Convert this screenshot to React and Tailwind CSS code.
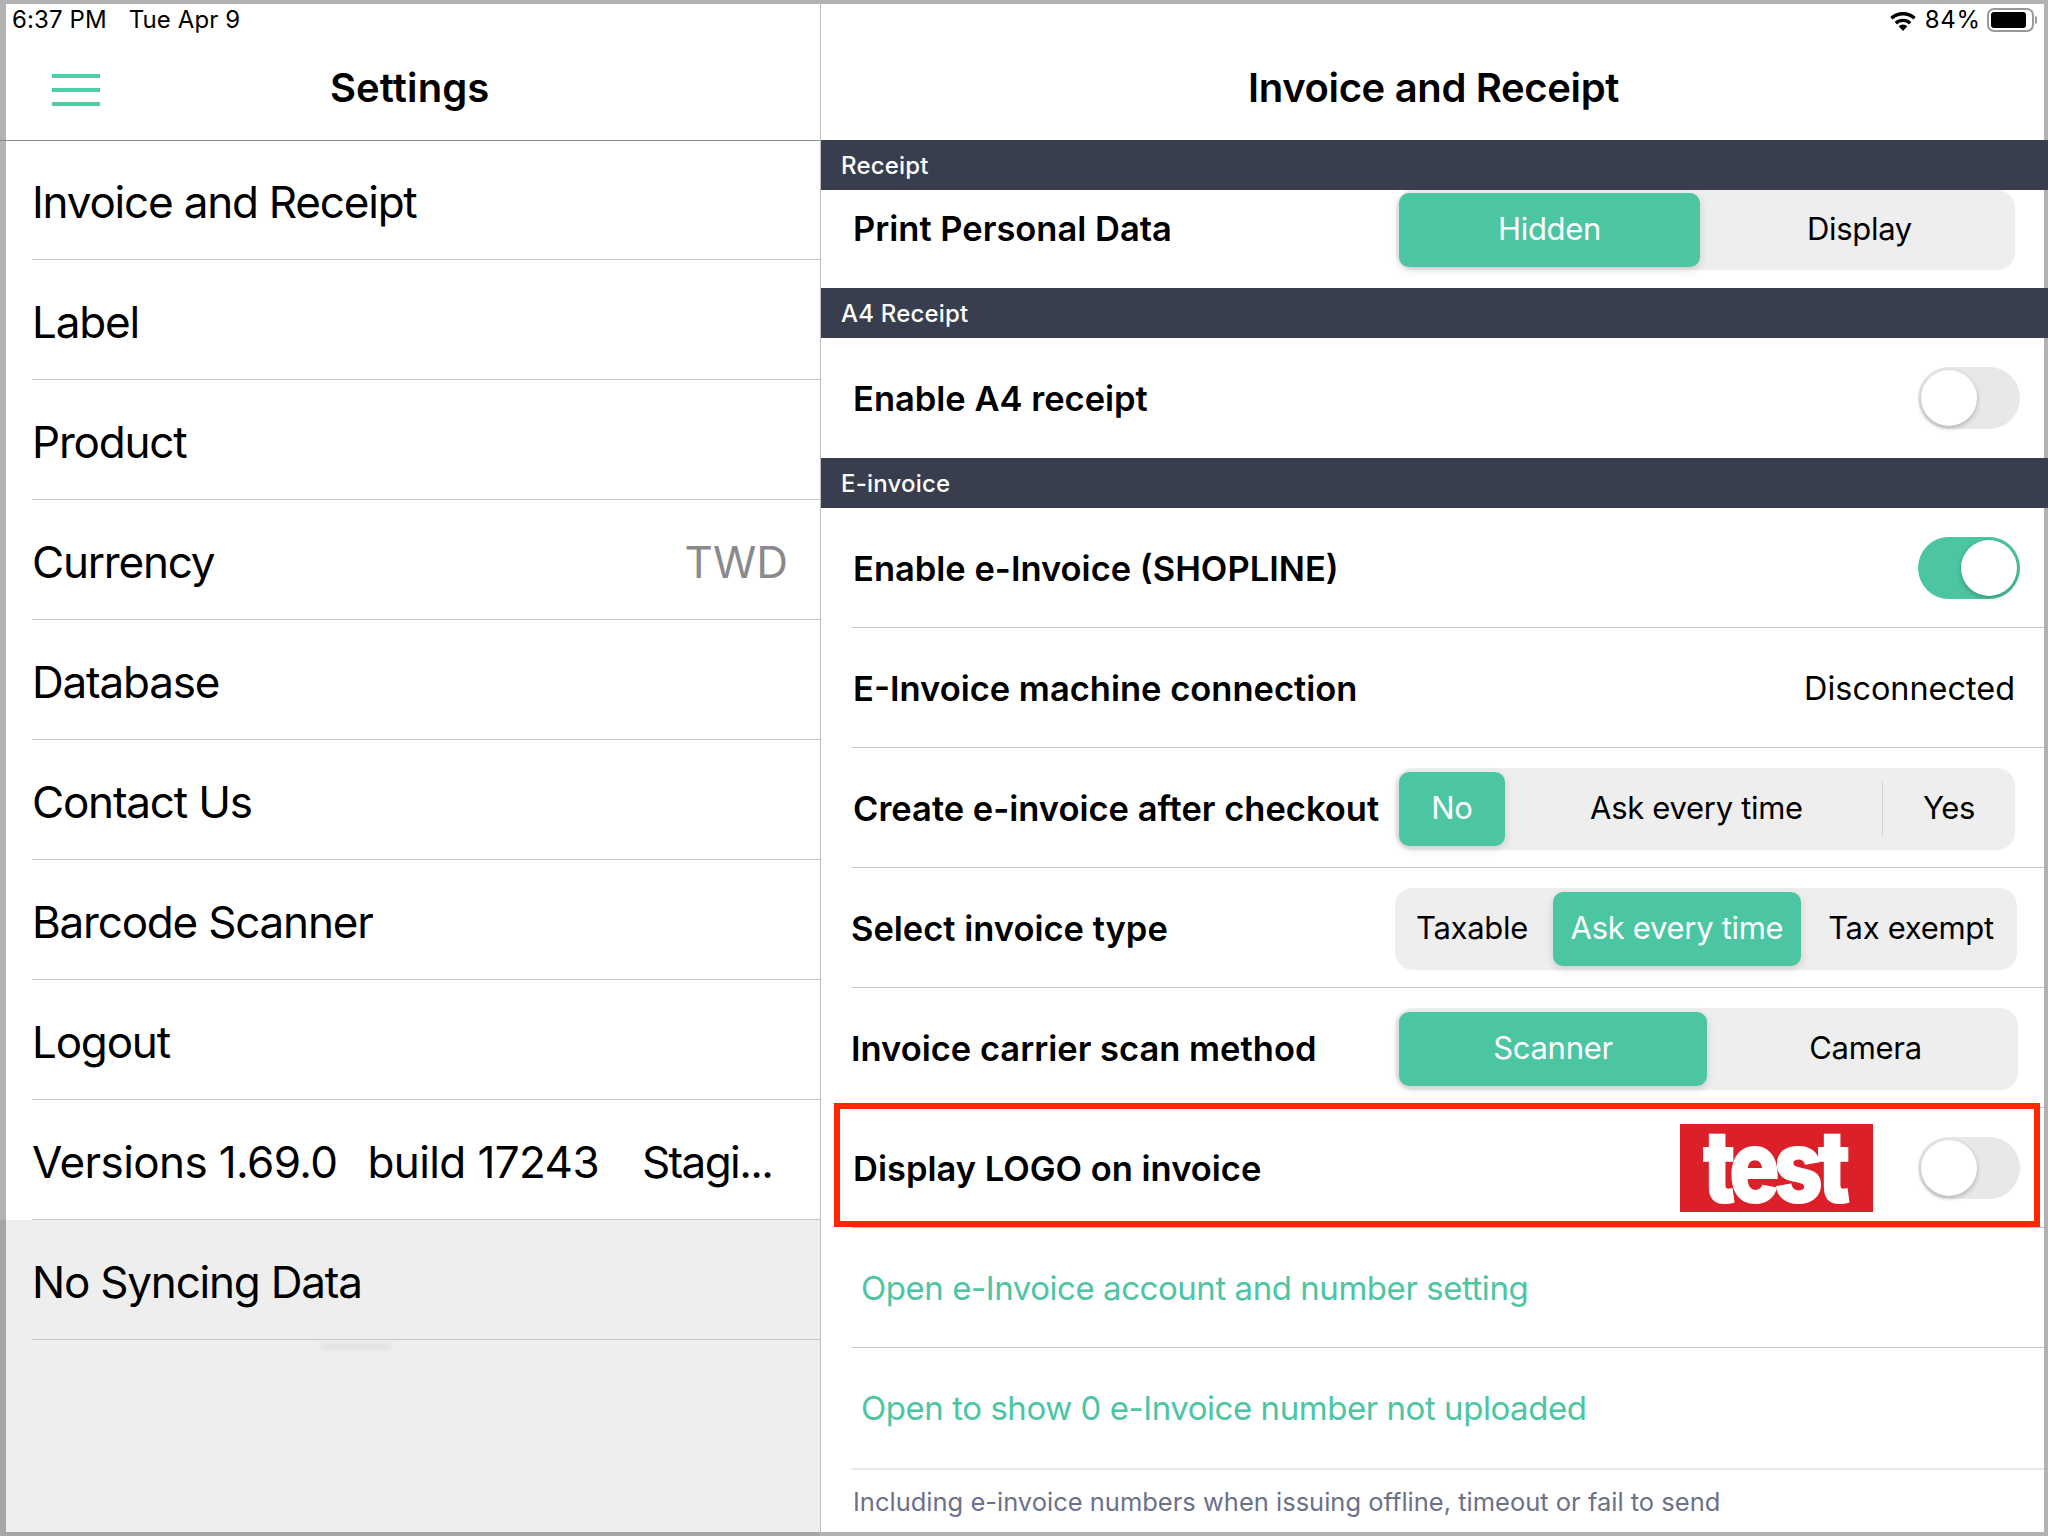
import React from "react";

const menu = [
  { label: "Invoice and Receipt", first: true },
  { label: "Label" },
  { label: "Product" },
  { label: "Currency", value: "TWD" },
  { label: "Database" },
  { label: "Contact Us" },
  { label: "Barcode Scanner" },
  { label: "Logout" },
];

function SectionBar({ children }) {
  return (
    <div className="h-[50px] -mr-[4px] bg-[#383e4e] flex items-center pl-[20px] pt-[1px] text-[24px] font-medium tracking-[0.2px] text-white">
      {children}
    </div>
  );
}

function Toggle({ on }) {
  return (
    <div
      className={
        on
          ? "ml-auto mr-[24px] w-[102px] h-[62px] rounded-full bg-[#4cc5a3] flex items-center justify-end pr-[3px]"
          : "ml-auto mr-[24px] w-[102px] h-[62px] rounded-full bg-[#e8e8ea] flex items-center pl-[3px]"
      }
    >
      <div className="w-[56px] h-[56px] rounded-full bg-white shadow-[0_2px_5px_rgba(0,0,0,0.25)]" />
    </div>
  );
}

function Segment({ className, children, active }) {
  return (
    <div
      className={
        (active
          ? "bg-[#4cc5a3] text-white rounded-[10px] h-[74px] shadow-[0_3px_8px_rgba(0,0,0,0.14)] "
          : "text-black h-[74px] ") +
        "flex items-center justify-center text-[31px] tracking-[-0.3px] shrink-0 " +
        className
      }
    >
      {children}
    </div>
  );
}

function Row({ label, labelClass = "", children }) {
  return (
    <div className="h-[120px] ml-[31px] border-b border-[#c6c6c8] flex items-center">
      <span className={"text-[34.5px] font-semibold text-black whitespace-nowrap pt-[2px] pl-[1px] " + labelClass}>
        {label}
      </span>
      {children}
    </div>
  );
}

export default function App() {
  return (
    <div className="w-[2048px] h-[1536px] bg-[#b2b2b2] pt-[4px] pr-[4px] pb-[4px] pl-[6px] overflow-hidden font-['Inter',sans-serif]">
      <div className="flex h-full bg-white">
        {/* Left: settings menu */}
        <div className="w-[815px] shrink-0 flex flex-col border-r border-[#c0c0c0] relative">
          <div className="h-[137px] shrink-0 -ml-[6px] pl-[6px] border-b border-[#8a8a8a]">
            <div className="h-[32px] flex items-center pl-[6px] gap-[22px] text-[24px] tracking-[0.1px] text-black">
              <span>6:37 PM</span>
              <span>Tue Apr 9</span>
            </div>
            <div className="h-[104px] flex items-center pl-[46px]">
              <div className="w-[48px] mt-[4px] flex flex-col gap-[10px]">
                <div className="h-[4px] bg-[#4fcca8]" />
                <div className="h-[4px] bg-[#4fcca8]" />
                <div className="h-[4px] bg-[#4fcca8]" />
              </div>
              <span className="ml-[230px] text-[40px] tracking-[0.1px] font-semibold text-black">Settings</span>
            </div>
          </div>

          {menu.map((item) => (
            <div
              key={item.label}
              className={
                (item.first ? "h-[119px] pt-[3px] " : "h-[120px] pt-[5px] ") +
                "ml-[26px] pr-[32px] border-b border-[#c6c6c8] flex items-center justify-between text-[44px] tracking-[-1.2px] text-black"
              }
            >
              <span>{item.label}</span>
              {item.value && <span className="text-[#8a8a8e] tracking-[0px]">{item.value}</span>}
            </div>
          ))}

          <div className="h-[120px] ml-[26px] pt-[5px] border-b border-[#c6c6c8] flex items-center text-[44px] tracking-[-0.6px] text-black whitespace-nowrap">
            <span>Versions 1.69.0</span>
            <span className="ml-[30px]">build 17243</span>
            <span className="ml-[43px] tracking-[-1.6px]">Stagi...</span>
          </div>

          <div className="flex-1 bg-[#eeeeee] -ml-[6px] -mb-[4px] border-l-[6px] border-b-[4px] border-[#a6a6a6]">
            <div className="h-[120px] ml-[26px] pt-[5px] border-b border-[#c6c6c8] flex items-center text-[44px] tracking-[-1.2px] text-black">
              No Syncing Data
            </div>
          </div>
          <div className="absolute left-[315px] top-[1341px] w-[70px] h-[3px] rounded-full bg-[#d8d8d8] blur-[2px]" />
        </div>

        {/* Right: invoice and receipt */}
        <div className="flex-1 flex flex-col min-w-0">
          <div className="h-[136px] shrink-0">
            <div className="h-[32px] flex items-center justify-end pr-[7px]">
              <svg width="28" height="21" viewBox="0 0 28 21" className="mr-[8px]">
                <path d="M14 21 L9.6 16.2 A6.6 6.6 0 0 1 18.4 16.2 Z" fill="#000" />
                <path d="M6.8 13.2 A10.6 10.6 0 0 1 21.2 13.2" fill="none" stroke="#000" strokeWidth="3.4" />
                <path d="M2.4 8.3 A17 17 0 0 1 25.6 8.3" fill="none" stroke="#000" strokeWidth="3.4" />
              </svg>
              <span className="text-[24px] text-black tracking-[0.8px]">84%</span>
              <div className="ml-[6px] w-[47px] h-[24px] rounded-[7px] border-2 border-[#9a9a9a] p-[2px]">
                <div className="w-[35px] h-full rounded-[3px] bg-black" />
              </div>
              <div className="ml-[1px] w-[2px] h-[8px] rounded-r-full bg-[#9a9a9a]" />
            </div>
            <div className="h-[104px] flex items-center justify-center pl-[2px]">
              <span className="text-[40px] tracking-[-0.35px] font-semibold text-black">Invoice and Receipt</span>
            </div>
          </div>

          <SectionBar>Receipt</SectionBar>
          <div className="h-[98px] ml-[31px] flex items-start">
            <span className="h-[78px] pl-[1px] flex items-center text-[34.5px] font-semibold text-black">Print Personal Data</span>
            <div className="ml-auto mr-[29px] w-[619px] h-[80px] bg-[#eeeeee] rounded-[18px] flex items-start pt-[3px] pl-[3px]">
              <Segment active className="w-[301px] pb-[2px]">Hidden</Segment>
              <Segment className="flex-1 pl-[4px] pb-[2px]">Display</Segment>
            </div>
          </div>

          <SectionBar>A4 Receipt</SectionBar>
          <div className="h-[120px] ml-[31px] flex items-center">
            <span className="text-[34.5px] pl-[1px] pt-[2px] font-semibold text-black">Enable A4 receipt</span>
            <Toggle />
          </div>

          <SectionBar>E-invoice</SectionBar>
          <Row label="Enable e-Invoice (SHOPLINE)">
            <Toggle on />
          </Row>
          <Row label="E-Invoice machine connection">
            <span className="ml-auto mr-[29px] text-[32.4px] text-black pt-[4px]">Disconnected</span>
          </Row>
          <Row label="Create e-invoice after checkout">
            <div className="ml-auto mr-[29px] mt-[2px] w-[620px] h-[82px] bg-[#eeeeee] rounded-[18px] flex items-center pl-[4px]">
              <Segment active className="w-[106px]">No</Segment>
              <Segment className="w-[377px] pl-[6px]">Ask every time</Segment>
              <div className="w-px h-[54px] bg-[#d2d2d2]" />
              <Segment className="flex-1">Yes</Segment>
            </div>
          </Row>
          <Row label="Select invoice type" labelClass="-ml-[2px]">
            <div className="ml-auto mr-[27px] mt-[2px] w-[622px] h-[82px] bg-[#eeeeee] rounded-[18px] flex items-center pl-[4px]">
              <Segment className="w-[154px] pr-[8px]">Taxable</Segment>
              <Segment active className="w-[248px]">Ask every time</Segment>
              <Segment className="flex-1 pl-[4px]">Tax exempt</Segment>
            </div>
          </Row>
          <Row label="Invoice carrier scan method" labelClass="-ml-[2px]">
            <div className="ml-auto mr-[26px] mt-[2px] w-[623px] h-[82px] bg-[#eeeeee] rounded-[18px] flex items-center pl-[4px]">
              <Segment active className="w-[308px]">Scanner</Segment>
              <Segment className="flex-1 pl-[6px]">Camera</Segment>
            </div>
          </Row>

          <div className="relative">
            <Row label="Display LOGO on invoice">
              <div className="ml-auto flex items-center">
                <div className="mr-[45px] w-[193px] h-[88px] bg-[#dc2029] flex items-center justify-center">
                  <span className="text-[84px] leading-none font-black text-white tracking-[-6px] scale-y-[1.22] -mt-[3px] pr-[6px]">test</span>
                </div>
                <Toggle />
              </div>
            </Row>
            <div className="absolute left-[13px] right-[4px] -top-[5px] h-[124px] border-[6px] border-[#ff2600] pointer-events-none" />
          </div>

          <div className="h-[120px] ml-[31px] pl-[9px] pt-[2px] border-b border-[#c6c6c8] flex items-center text-[33px] tracking-[-0.45px] text-[#4cc5a3]">
            Open e-Invoice account and number setting
          </div>
          <div className="h-[122px] ml-[31px] pl-[9px] pt-[2px] border-b-2 border-[#e6e8f0] flex items-center text-[33px] tracking-[-0.45px] text-[#4cc5a3]">
            Open to show 0 e-Invoice number not uploaded
          </div>
          <div className="flex-1 ml-[31px] pl-[1px] pt-[2px] flex items-center text-[25.5px] text-[#6b7189]">
            Including e-invoice numbers when issuing offline, timeout or fail to send
          </div>
        </div>
      </div>
    </div>
  );
}
